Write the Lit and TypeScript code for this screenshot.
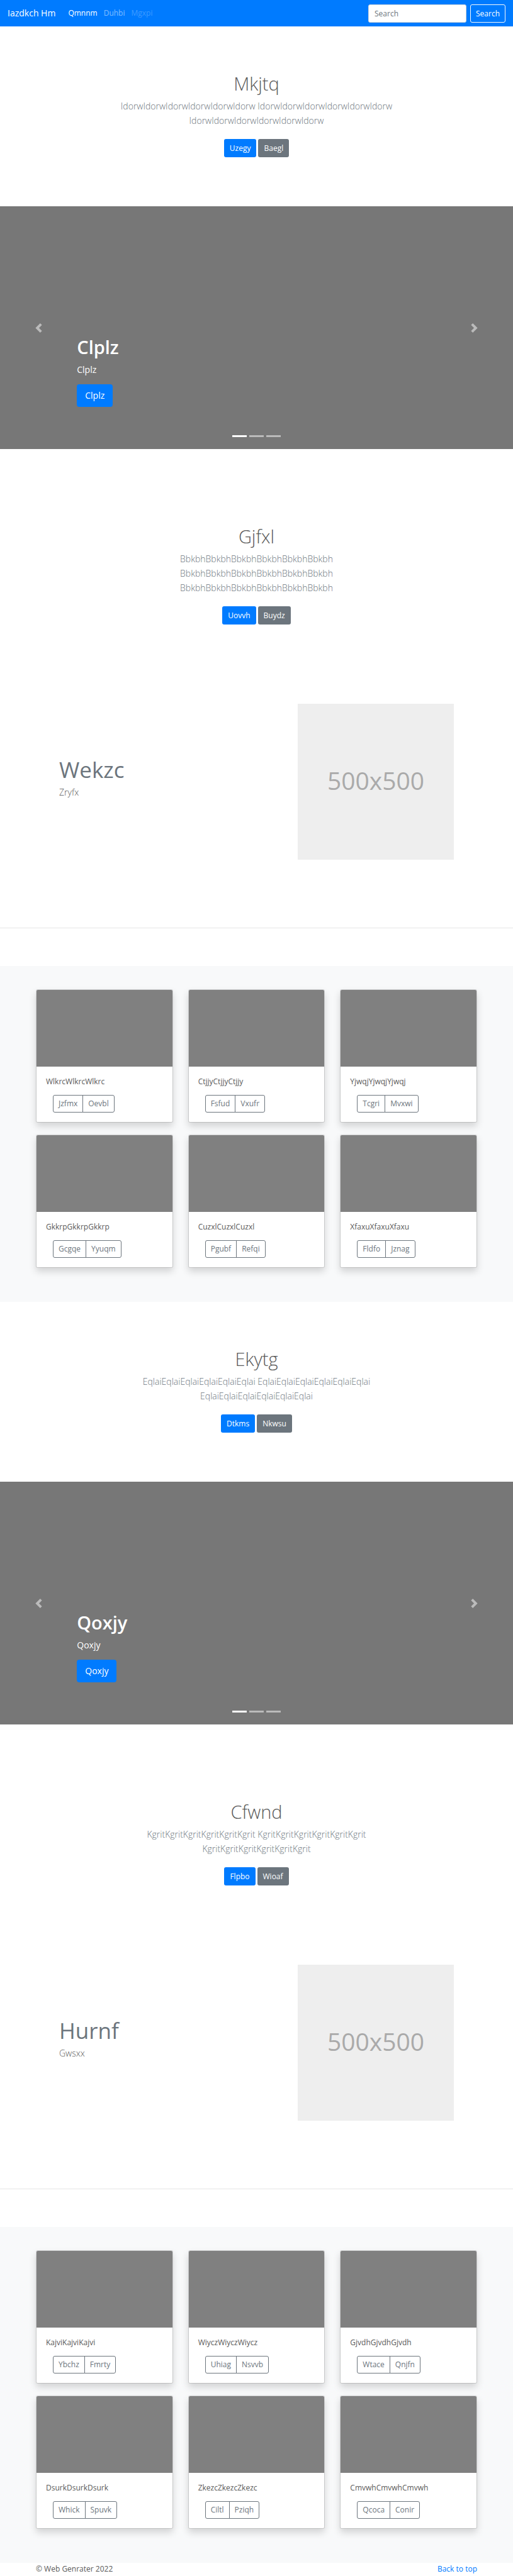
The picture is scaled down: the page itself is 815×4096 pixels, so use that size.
import { LitElement, html, css } from "lit";
import { customElement, property } from "lit/decorators.js";

const shared = css`
  *,
  *::before,
  *::after {
    box-sizing: border-box;
  }
  h1,
  h2,
  p {
    margin: 0;
  }
  a {
    text-decoration: none;
  }
  button,
  input {
    font: inherit;
  }
  .btn {
    display: inline-block;
    height: 29px;
    padding: 0 8px;
    border: 1px solid transparent;
    border-radius: 3px;
    color: #fff;
    font-size: 12px;
    line-height: 27px;
    background: transparent;
    cursor: pointer;
  }
  .primary {
    background: #007bff;
  }
  .secondary {
    background: #6c757d;
  }
`;

@customElement("site-header")
class SiteHeader extends LitElement {
  static styles = [
    shared,
    css`
      .bar {
        display: flex;
        align-items: center;
        height: 42px;
        padding: 0 12px;
        background: #007bff;
      }
      .brand {
        margin-right: 20px;
        color: #fff;
        font-size: 14px;
      }
      .links {
        display: flex;
        flex: 1;
        gap: 10px;
      }
      .link {
        color: rgba(255, 255, 255, 0.5);
      }
      .active {
        color: #fff;
      }
      .disabled {
        color: rgba(255, 255, 255, 0.25);
      }
      .search {
        display: flex;
        gap: 6px;
      }
      .field {
        width: 156px;
        height: 29px;
        padding: 0 9px;
        border: 1px solid #ced4da;
        border-radius: 3px;
        background: #fff;
        color: #495057;
      }
      .field::placeholder {
        color: #6c757d;
        opacity: 1;
      }
      .outline {
        border-color: #f8f9fa;
      }
    `,
  ];
  render() {
    return html`<nav class="bar">
      <a class="brand" href="#">Iazdkch Hm</a>
      <div class="links">
        <a class="link active" href="#">Qmnnm</a>
        <a class="link" href="#">Duhbi</a>
        <a class="link disabled" href="#" aria-disabled="true">Mgxpi</a>
      </div>
      <form class="search" role="search">
        <input class="field" type="search" placeholder="Search" aria-label="Search" />
        <button class="btn outline" type="button">Search</button>
      </form>
    </nav>`;
  }
}

@customElement("intro-block")
class IntroBlock extends LitElement {
  @property() heading = "";
  @property() word = "";
  @property() first = "";
  @property() second = "";
  static styles = [
    shared,
    css`
      :host {
        display: block;
      }
      .intro {
        padding: 72px 0;
        text-align: center;
      }
      .inner {
        max-width: 484px;
        margin: 0 auto;
        padding: 0 11px;
      }
      .title {
        margin-bottom: 5px;
        font-size: 29px;
        font-weight: 300;
        line-height: 38px;
      }
      .lead {
        margin-bottom: 12px;
        color: #6c757d;
        font-size: 14px;
        font-weight: 300;
        line-height: 23px;
      }
      .actions {
        display: flex;
        justify-content: center;
        gap: 3px;
        padding: 6px 0;
      }
    `,
  ];
  render() {
    const run = this.word.repeat(6);
    return html`<section class="intro">
      <div class="inner">
        <h1 class="title">${this.heading}</h1>
        <p class="lead">${run} ${run} ${run}</p>
        <div class="actions">
          <button class="btn primary">${this.first}</button>
          <button class="btn secondary">${this.second}</button>
        </div>
      </div>
    </section>`;
  }
}

@customElement("hero-carousel")
class HeroCarousel extends LitElement {
  @property() label = "";
  static styles = [
    shared,
    css`
      :host {
        display: block;
        margin-bottom: 48px;
      }
      .carousel {
        position: relative;
        display: grid;
        grid-template-columns: 15% 1fr 15%;
        height: 386px;
        background: #777;
        color: #fff;
      }
      .arrow {
        display: flex;
        align-items: center;
        justify-content: center;
        padding: 0;
        border: 0;
        background: none;
        opacity: 0.5;
        cursor: pointer;
      }
      .icon {
        width: 15px;
        height: 15px;
        fill: #fff;
      }
      .caption {
        display: flex;
        flex-direction: column;
        align-items: flex-start;
        justify-content: flex-end;
        padding-bottom: 67px;
      }
      .title {
        margin-bottom: 5px;
        font-size: 29px;
        font-weight: 600;
        line-height: 38px;
      }
      .text {
        margin-bottom: 12px;
        font-size: 14px;
        line-height: 23px;
      }
      .large {
        height: 36px;
        padding: 0 12px;
        border-radius: 4px;
        font-size: 14px;
        line-height: 34px;
      }
      .dots {
        position: absolute;
        inset: auto 0 19px;
        display: flex;
        justify-content: center;
        gap: 4px;
      }
      .dot {
        width: 23px;
        height: 3px;
        padding: 0;
        border: 0;
        background: #fff;
        opacity: 0.5;
      }
      .current {
        opacity: 1;
      }
    `,
  ];
  render() {
    return html`<section class="carousel">
      <button class="arrow" aria-label="Previous">
        <svg class="icon" viewBox="0 0 8 8"><path d="M5.25 0l-4 4 4 4 1.5-1.5-2.5-2.5 2.5-2.5-1.5-1.5z" /></svg>
      </button>
      <div class="caption">
        <h1 class="title">${this.label}</h1>
        <p class="text">${this.label}</p>
        <button class="btn primary large">${this.label}</button>
      </div>
      <button class="arrow" aria-label="Next">
        <svg class="icon" viewBox="0 0 8 8"><path d="M2.75 0l-1.5 1.5 2.5 2.5-2.5 2.5 1.5 1.5 4-4-4-4z" /></svg>
      </button>
      <div class="dots">
        <button class="dot current" aria-label="Slide 1"></button>
        <button class="dot" aria-label="Slide 2"></button>
        <button class="dot" aria-label="Slide 3"></button>
      </div>
    </section>`;
  }
}

@customElement("feature-row")
class FeatureRow extends LitElement {
  @property() heading = "";
  @property() text = "";
  static styles = [
    shared,
    css`
      :host {
        display: block;
      }
      .row {
        display: flex;
        align-items: center;
        justify-content: space-between;
        padding: 48px 94px 108px;
      }
      .title {
        margin-bottom: 4px;
        color: #6c757d;
        font-size: 35px;
        font-weight: 400;
        line-height: 40px;
      }
      .text {
        margin-bottom: 12px;
        font-size: 14px;
        font-weight: 300;
        line-height: 23px;
      }
      .picture {
        display: flex;
        align-items: center;
        justify-content: center;
        width: 248px;
        padding-bottom: 4px;
        aspect-ratio: 1;
        background: #eee;
        color: #aaa;
        font-size: 39px;
      }
      .rule {
        margin: 0 0 60px;
        border: 0;
        border-top: 1px solid rgba(0, 0, 0, 0.1);
      }
    `,
  ];
  render() {
    return html`<section class="row">
        <div>
          <h2 class="title">${this.heading}</h2>
          <p class="text">${this.text}</p>
        </div>
        <div class="picture">500x500</div>
      </section>
      <hr class="rule" />`;
  }
}

@customElement("card-album")
class CardAlbum extends LitElement {
  @property({ attribute: false }) cards: string[][] = [];
  static styles = [
    shared,
    css`
      :host {
        display: block;
      }
      .album {
        display: grid;
        grid-template-columns: repeat(3, 1fr);
        gap: 19px 24px;
        padding: 37px 57px 54px;
        background: #f8f9fa;
      }
      .card {
        overflow: hidden;
        border: 1px solid rgba(0, 0, 0, 0.125);
        border-radius: 3px;
        background: #fff;
        background-clip: padding-box;
        box-shadow: 0 6px 12px rgba(0, 0, 0, 0.15);
      }
      .thumb {
        height: 122px;
        background: #808080;
      }
      .body {
        padding: 15px;
      }
      .text {
        margin-bottom: 12px;
        line-height: 18px;
      }
      .group {
        display: flex;
        margin-left: 11px;
      }
      .item {
        height: 28px;
        padding: 0 8px;
        border: 1px solid #6c757d;
        border-radius: 3px 0 0 3px;
        background: transparent;
        color: #6c757d;
        line-height: 26px;
      }
      .item + .item {
        margin-left: -1px;
        border-radius: 0 3px 3px 0;
      }
    `,
  ];
  render() {
    return html`<section class="album">
      ${this.cards.map(
        ([word, first, second]) => html`<article class="card">
          <div class="thumb"></div>
          <div class="body">
            <p class="text">${word.repeat(3)}</p>
            <div class="group">
              <button class="item">${first}</button>
              <button class="item">${second}</button>
            </div>
          </div>
        </article>`
      )}
    </section>`;
  }
}

const firstCards = [
  ["Wlkrc", "Jzfmx", "Oevbl"],
  ["Ctjjy", "Fsfud", "Vxufr"],
  ["Yjwqj", "Tcgri", "Mvxwi"],
  ["Gkkrp", "Gcgqe", "Yyuqm"],
  ["Cuzxl", "Pgubf", "Refqi"],
  ["Xfaxu", "Fldfo", "Jznag"],
];
const secondCards = [
  ["Kajvi", "Ybchz", "Fmrty"],
  ["Wiycz", "Uhiag", "Nsvvb"],
  ["Gjvdh", "Wtace", "Qnjfn"],
  ["Dsurk", "Whick", "Spuvk"],
  ["Zkezc", "Ciltl", "Pziqh"],
  ["Cmvwh", "Qcoca", "Conir"],
];

@customElement("app-root")
class AppRoot extends LitElement {
  static styles = [
    shared,
    css`
      :host {
        display: block;
        background: #fff;
        color: #5a5a5a;
        font-family: "Open Sans", "Noto Sans", sans-serif;
        font-size: 12px;
        line-height: 18px;
      }
      .footer {
        display: flex;
        justify-content: space-between;
        height: 21px;
        padding: 1px 57px 0;
      }
      .top {
        color: #007bff;
      }
    `,
  ];
  render() {
    return html`<site-header></site-header>
      <main>
        <intro-block heading="Mkjtq" word="Idorw" first="Uzegy" second="Baegl"></intro-block>
        <hero-carousel label="Clplz"></hero-carousel>
        <intro-block heading="Gjfxl" word="Bbkbh" first="Uovvh" second="Buydz"></intro-block>
        <feature-row heading="Wekzc" text="Zryfx"></feature-row>
        <card-album .cards=${firstCards}></card-album>
        <intro-block heading="Ekytg" word="Eqlai" first="Dtkms" second="Nkwsu"></intro-block>
        <hero-carousel label="Qoxjy"></hero-carousel>
        <intro-block heading="Cfwnd" word="Kgrit" first="Flpbo" second="Wioaf"></intro-block>
        <feature-row heading="Hurnf" text="Gwsxx"></feature-row>
        <card-album .cards=${secondCards}></card-album>
      </main>
      <footer class="footer">
        <span>© Web Genrater 2022</span>
        <a class="top" href="#">Back to top</a>
      </footer>`;
  }
}
